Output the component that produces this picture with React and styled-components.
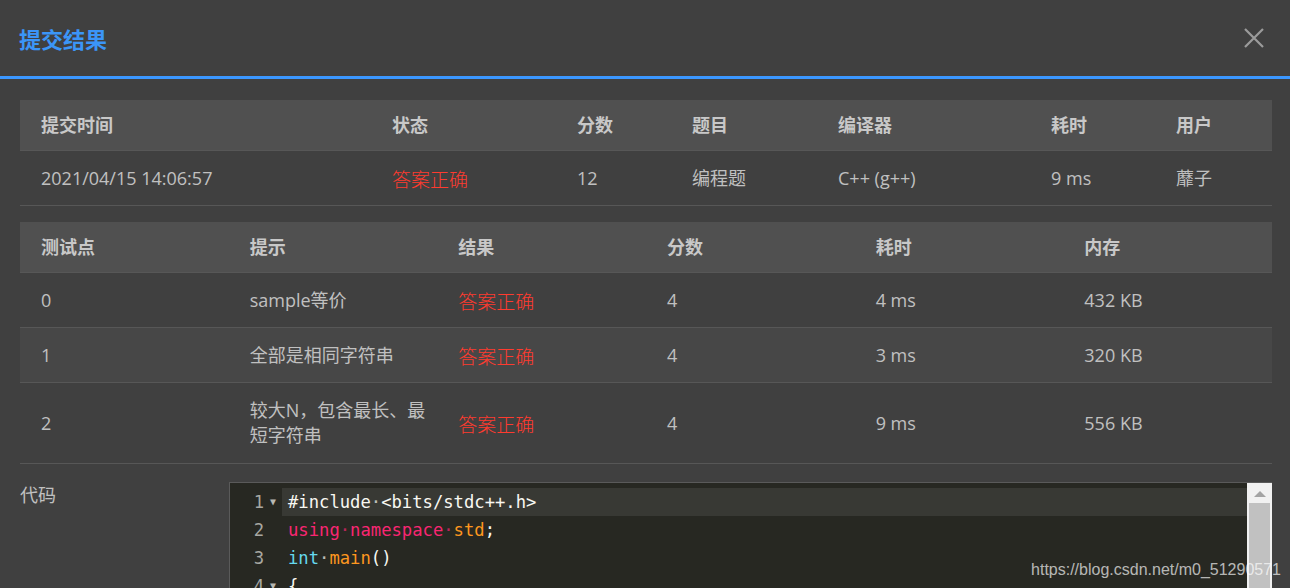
import React from "react";
import styled, { createGlobalStyle } from "styled-components";

const GlobalStyle = createGlobalStyle`
  html, body {
    margin: 0;
    padding: 0;
    background: #404040;
    overflow: hidden;
  }
`;

const Modal = styled.div`
  position: relative;
  width: 1290px;
  height: 588px;
  overflow: hidden;
  background: #404040;
  font-family: "Open Sans", "Noto Sans CJK SC", sans-serif;
  color: #c2c2c2;
`;

const Header = styled.div`
  display: flex;
  align-items: center;
  justify-content: space-between;
  height: 76px;
  padding: 0 25px 0 19px;
  border-bottom: 3px solid #3b97ff;
`;

const Title = styled.h2`
  margin: 0;
  font-family: "Noto Sans CJK SC", sans-serif;
  font-size: 22px;
  font-weight: 700;
  color: #3b95f7;
`;

const CloseButton = styled.button`
  display: flex;
  padding: 0;
  border: none;
  background: none;
  cursor: pointer;
`;

const Body = styled.div`
  padding: 21px 18px 0 20px;
`;

const Table = styled.div`
  display: grid;
  grid-template-columns: ${(p) => p.$cols};
  margin-bottom: ${(p) => p.$gap || 0}px;
`;

const Row = styled.div`
  display: grid;
  grid-column: 1 / -1;
  grid-template-columns: subgrid;
  align-items: center;
  height: ${(p) => (p.$head ? 50 : p.$tall ? 80 : 54)}px;
  background: ${(p) => (p.$head ? "#505050" : p.$striped ? "#474747" : "transparent")};
  border-bottom: 1px solid #575757;
  font-size: 18px;
  font-weight: ${(p) => (p.$head ? 700 : 400)};
  color: ${(p) => (p.$head ? "#c8c8c8" : "#c0c0c0")};
`;

const Cell = styled.div`
  padding: 0 10px 0 21px;
  line-height: 25px;
  color: ${(p) => (p.$ok ? "#ff3b2f" : "inherit")};
  font-size: ${(p) => (p.$ok ? "19px" : "inherit")};
  font-weight: ${(p) => (p.$ok ? 300 : "inherit")};
  font-family: ${(p) => (p.$ok ? '"Noto Sans CJK SC", sans-serif' : "inherit")};
`;

const Hint = styled.span`
  display: block;
  max-width: 180px;
`;

const CodeSection = styled.div`
  display: grid;
  grid-template-columns: 209px 1fr;
  margin-top: 18px;
`;

const Label = styled.div`
  font-family: "Noto Sans CJK SC", sans-serif;
  font-size: 18px;
  line-height: 24px;
  color: #c0c0c0;
`;

const Editor = styled.div`
  display: flex;
  height: 240px;
  border-top: 1px solid #5a5a5a;
  border-left: 1px solid #5a5a5a;
  background: #272822;
  font-family: "DejaVu Sans Mono", monospace;
  font-size: 17.2px;
`;

const Gutter = styled.div`
  width: 52px;
  padding-top: 5px;
  background: #272822;
  color: #a8a8a2;
`;

const GutterLine = styled.div`
  position: relative;
  height: 28px;
  line-height: 28px;
  padding-right: 18px;
  text-align: right;
`;

const Fold = styled.span`
  position: absolute;
  right: 6px;
  top: 0;
  font-size: 10px;
  color: #b8b8b2;
`;

const Lines = styled.div`
  flex: 1;
  padding-top: 5px;
`;

const Line = styled.div`
  height: 28px;
  line-height: 28px;
  padding-left: 6px;
  white-space: pre;
  background: ${(p) => (p.$active ? "#383934" : "transparent")};
  color: #f8f8f2;
`;

const Tok = styled.span`
  color: ${(p) =>
    ({ kw: "#f92672", type: "#66d9ef", fn: "#fd971f", id: "#fd971f" }[p.$k] || "#f8f8f2")};
`;

const Dot = styled.span`
  opacity: 0.7;
`;

const Scrollbar = styled.div`
  display: flex;
  flex-direction: column;
  align-items: center;
  width: 25px;
  background: #f1f1f1;
`;

const ScrollArrow = styled.div`
  margin: 8px 0 6px;
  width: 0;
  height: 0;
  border-left: 6px solid transparent;
  border-right: 6px solid transparent;
  border-bottom: 6px solid #a3a3a3;
`;

const Thumb = styled.div`
  width: 21px;
  flex: 1;
  background: #c1c1c1;
`;

const Watermark = styled.div`
  position: absolute;
  right: 9px;
  bottom: 9px;
  font-family: "Liberation Sans", Arial, sans-serif;
  font-size: 16px;
  color: rgba(255, 255, 255, 0.68);
`;

const summaryHead = ["提交时间", "状态", "分数", "题目", "编译器", "耗时", "用户"];
const cases = [
  { id: "0", hint: "sample等价", score: "4", time: "4 ms", mem: "432 KB" },
  { id: "1", hint: "全部是相同字符串", score: "4", time: "3 ms", mem: "320 KB" },
  { id: "2", hint: "较大N，包含最长、最短字符串", score: "4", time: "9 ms", mem: "556 KB" },
];

const code = [
  { fold: true, toks: [["", "#include"], ["dot"], ["", "<bits/stdc++.h>"]] },
  { toks: [["kw", "using"], ["dot", "kw"], ["kw", "namespace"], ["dot", "kw"], ["id", "std"], ["", ";"]] },
  { toks: [["type", "int"], ["dot"], ["fn", "main"], ["", "()"]] },
  { fold: true, toks: [["", "{"]] },
  { toks: [["", "    "], ["type", "int"], ["dot"], ["", "n;"]] },
  { toks: [["", "    "], ["", "cin>>n;"]] },
  { toks: [["", "}"]] },
];

const CloseIcon = () => (
  <svg width="22" height="22" viewBox="0 0 22 22">
    <path d="M2 2 L20 20 M20 2 L2 20" stroke="#9b9b9b" strokeWidth="2.2" fill="none" />
  </svg>
);

export default function App() {
  return (
    <Modal>
      <GlobalStyle />
      <Header>
        <Title>提交结果</Title>
        <CloseButton>
          <CloseIcon />
        </CloseButton>
      </Header>
      <Body>
        <Table $cols="351px 185px 115px 146px 213px 125px 1fr" $gap={16}>
          <Row $head>
            {summaryHead.map((h) => (
              <Cell key={h}>{h}</Cell>
            ))}
          </Row>
          <Row>
            <Cell>2021/04/15 14:06:57</Cell>
            <Cell $ok>答案正确</Cell>
            <Cell>12</Cell>
            <Cell>编程题</Cell>
            <Cell>C++ (g++)</Cell>
            <Cell>9 ms</Cell>
            <Cell>蘼子</Cell>
          </Row>
        </Table>

        <Table $cols="repeat(6, 1fr)">
          <Row $head>
            {["测试点", "提示", "结果", "分数", "耗时", "内存"].map((h) => (
              <Cell key={h}>{h}</Cell>
            ))}
          </Row>
          {cases.map((c, i) => (
            <Row key={c.id} $striped={i === 1} $tall={i === 2}>
              <Cell>{c.id}</Cell>
              <Cell>
                <Hint>{c.hint}</Hint>
              </Cell>
              <Cell $ok>答案正确</Cell>
              <Cell>{c.score}</Cell>
              <Cell>{c.time}</Cell>
              <Cell>{c.mem}</Cell>
            </Row>
          ))}
        </Table>

        <CodeSection>
          <Label>代码</Label>
          <Editor>
            <Gutter>
              {code.map((l, i) => (
                <GutterLine key={i}>
                  {i + 1}
                  {l.fold && <Fold>▼</Fold>}
                </GutterLine>
              ))}
            </Gutter>
            <Lines>
              {code.map((l, i) => (
                <Line key={i} $active={i === 0}>
                  {l.toks.map(([k, t], j) =>
                    k === "dot" ? (
                      <Dot key={j}>
                        <Tok $k={t}>·</Tok>
                      </Dot>
                    ) : (
                      <Tok key={j} $k={k}>
                        {t}
                      </Tok>
                    )
                  )}
                </Line>
              ))}
            </Lines>
            <Scrollbar>
              <ScrollArrow />
              <Thumb />
            </Scrollbar>
          </Editor>
        </CodeSection>
      </Body>
      <Watermark>https://blog.csdn.net/m0_51290571</Watermark>
    </Modal>
  );
}
